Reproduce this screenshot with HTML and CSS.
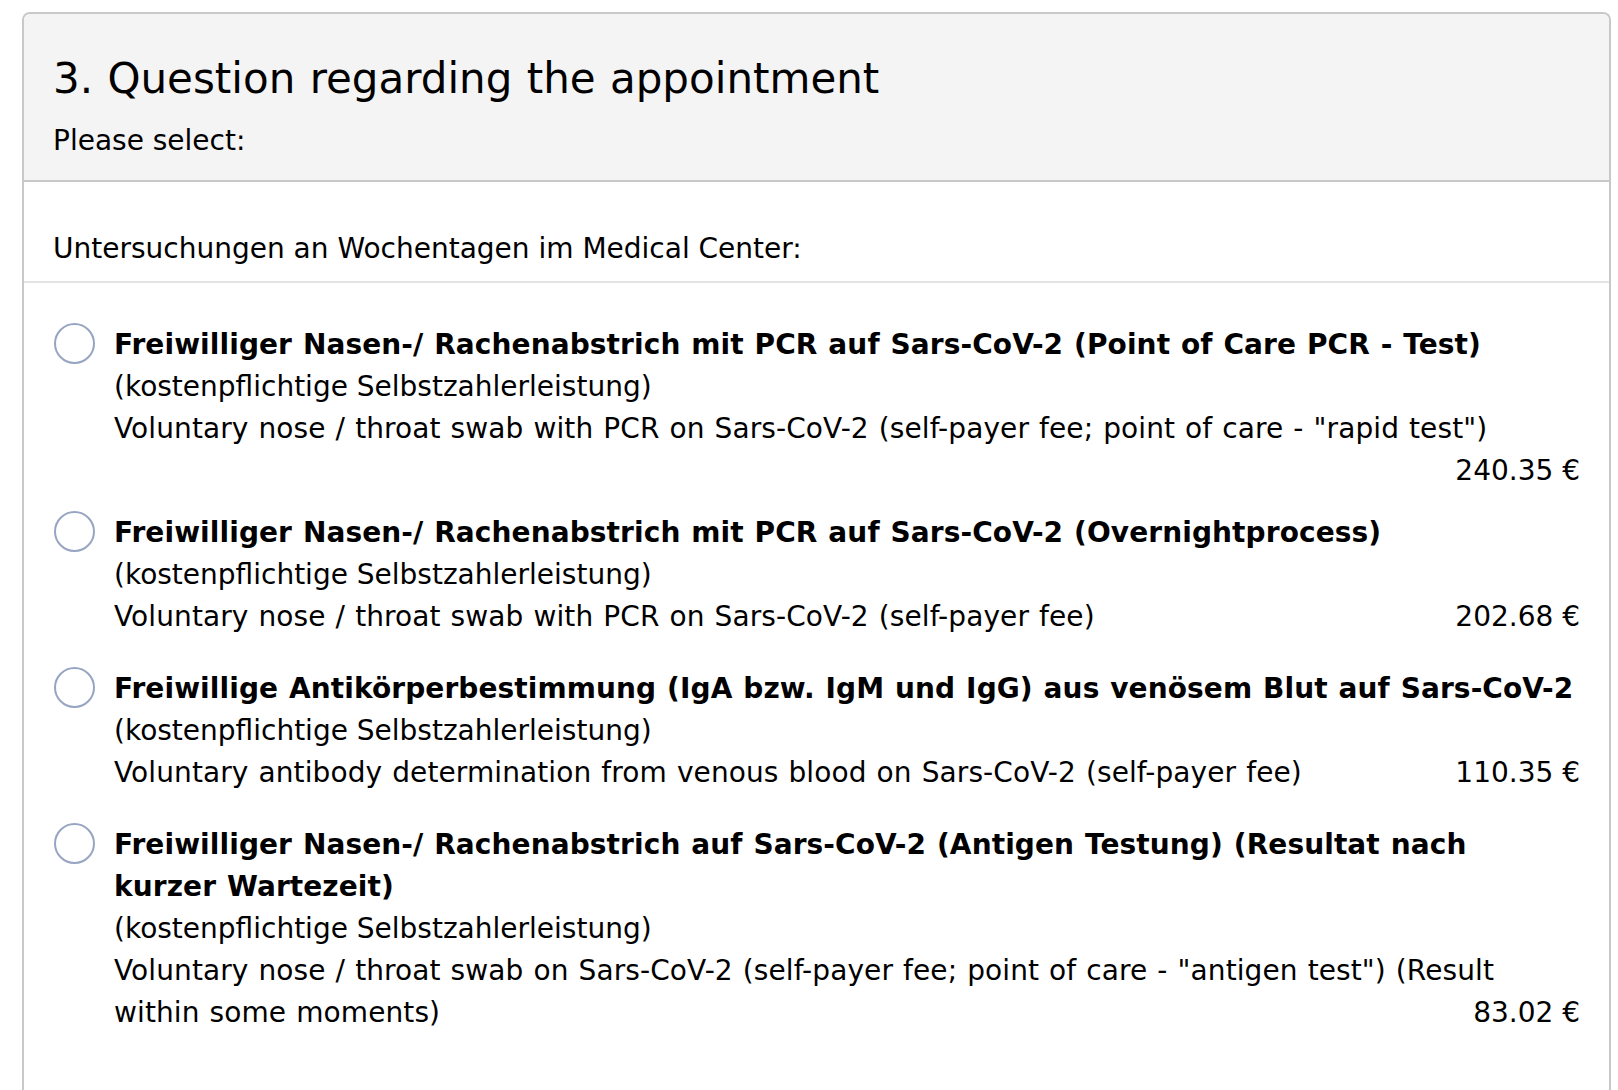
FILE: index.html
```html
<!DOCTYPE html>
<html lang="de">
<head>
<meta charset="utf-8">
<title>Question regarding the appointment</title>
<link rel="stylesheet" href="styles.css">
</head>
<body>
<section class="card">
  <header class="card-header">
    <h2 class="card-title">3. Question regarding the appointment</h2>
    <p class="card-hint">Please select:</p>
  </header>
  <div class="group-label">Untersuchungen an Wochentagen im Medical Center:</div>
  <ul class="options">
    <li class="option">
      <span class="radio"></span>
      <div class="option-text">
        <div class="option-title">Freiwilliger Nasen-/ Rachenabstrich mit PCR auf Sars-CoV-2 (Point of Care PCR - Test)</div>
        <div class="option-sub">(kostenpflichtige Selbstzahlerleistung)</div>
        <div class="option-desc">Voluntary nose / throat swab with PCR on Sars-CoV-2 (self-payer fee; point of care - "rapid test")<span class="price">240.35 €</span></div>
      </div>
    </li>
    <li class="option">
      <span class="radio"></span>
      <div class="option-text">
        <div class="option-title">Freiwilliger Nasen-/ Rachenabstrich mit PCR auf Sars-CoV-2 (Overnightprocess)</div>
        <div class="option-sub">(kostenpflichtige Selbstzahlerleistung)</div>
        <div class="option-desc">Voluntary nose / throat swab with PCR on Sars-CoV-2 (self-payer fee)<span class="price">202.68 €</span></div>
      </div>
    </li>
    <li class="option">
      <span class="radio"></span>
      <div class="option-text">
        <div class="option-title">Freiwillige Antikörperbestimmung (IgA bzw. IgM und IgG) aus venösem Blut auf Sars-CoV-2</div>
        <div class="option-sub">(kostenpflichtige Selbstzahlerleistung)</div>
        <div class="option-desc">Voluntary antibody determination from venous blood on Sars-CoV-2 (self-payer fee)<span class="price">110.35 €</span></div>
      </div>
    </li>
    <li class="option">
      <span class="radio"></span>
      <div class="option-text">
        <div class="option-title">Freiwilliger Nasen-/ Rachenabstrich auf Sars-CoV-2 (Antigen Testung) (Resultat nach kurzer&nbsp;Wartezeit)</div>
        <div class="option-sub">(kostenpflichtige Selbstzahlerleistung)</div>
        <div class="option-desc">Voluntary nose / throat swab on Sars-CoV-2 (self-payer fee; point of care - "antigen test") (Result within some moments)<span class="price">83.02 €</span></div>
      </div>
    </li>
  </ul>
</section>
</body>
</html>
```

FILE: styles.css
```css
html, body {
  margin: 0;
  padding: 0;
  background: #ffffff;
}

body {
  font-family: "DejaVu Sans", Verdana, sans-serif;
  font-size: 28px;
  line-height: 42px;
  color: #000000;
  overflow: hidden;
}

.card {
  margin: 12px 7px 0 22px;
  border: 2px solid #c8c8c8;
  border-bottom: none;
  border-radius: 8px 8px 0 0;
  height: 1100px;
  box-sizing: border-box;
}

.card-header {
  background: #f4f4f4;
  border-bottom: 2px solid #c8c8c8;
  border-radius: 6px 6px 0 0;
  padding: 40px 29px 18px 29px;
}

.card-title {
  margin: 0;
  font-size: 42px;
  line-height: 50px;
  font-weight: normal;
  word-spacing: 1px;
}

.card-hint {
  margin: 16px 0 0 0;
}

.group-label {
  padding: 46px 29px 11px 29px;
  border-bottom: 2px solid #e3e3e3;
}

.options {
  list-style: none;
  margin: 0;
  padding: 41px 29px 0 30px;
}

.option {
  display: flex;
  align-items: flex-start;
  margin-bottom: 30px;
}

.radio {
  flex: none;
  width: 41px;
  height: 41px;
  box-sizing: border-box;
  border: 2px solid #97a5c2;
  border-radius: 50%;
  background: #ffffff;
  margin-top: -1px;
  margin-right: 19px;
}

.option-text {
  flex: 1;
  display: flow-root;
}

.option-title {
  font-weight: bold;
  word-spacing: 1px;
  letter-spacing: 0.1px;
}

.option-desc {
  word-spacing: 1px;
  letter-spacing: 0.1px;
}

.price {
  float: right;
  margin-bottom: -10px;
  word-spacing: 0;
  letter-spacing: 0;
}
```
